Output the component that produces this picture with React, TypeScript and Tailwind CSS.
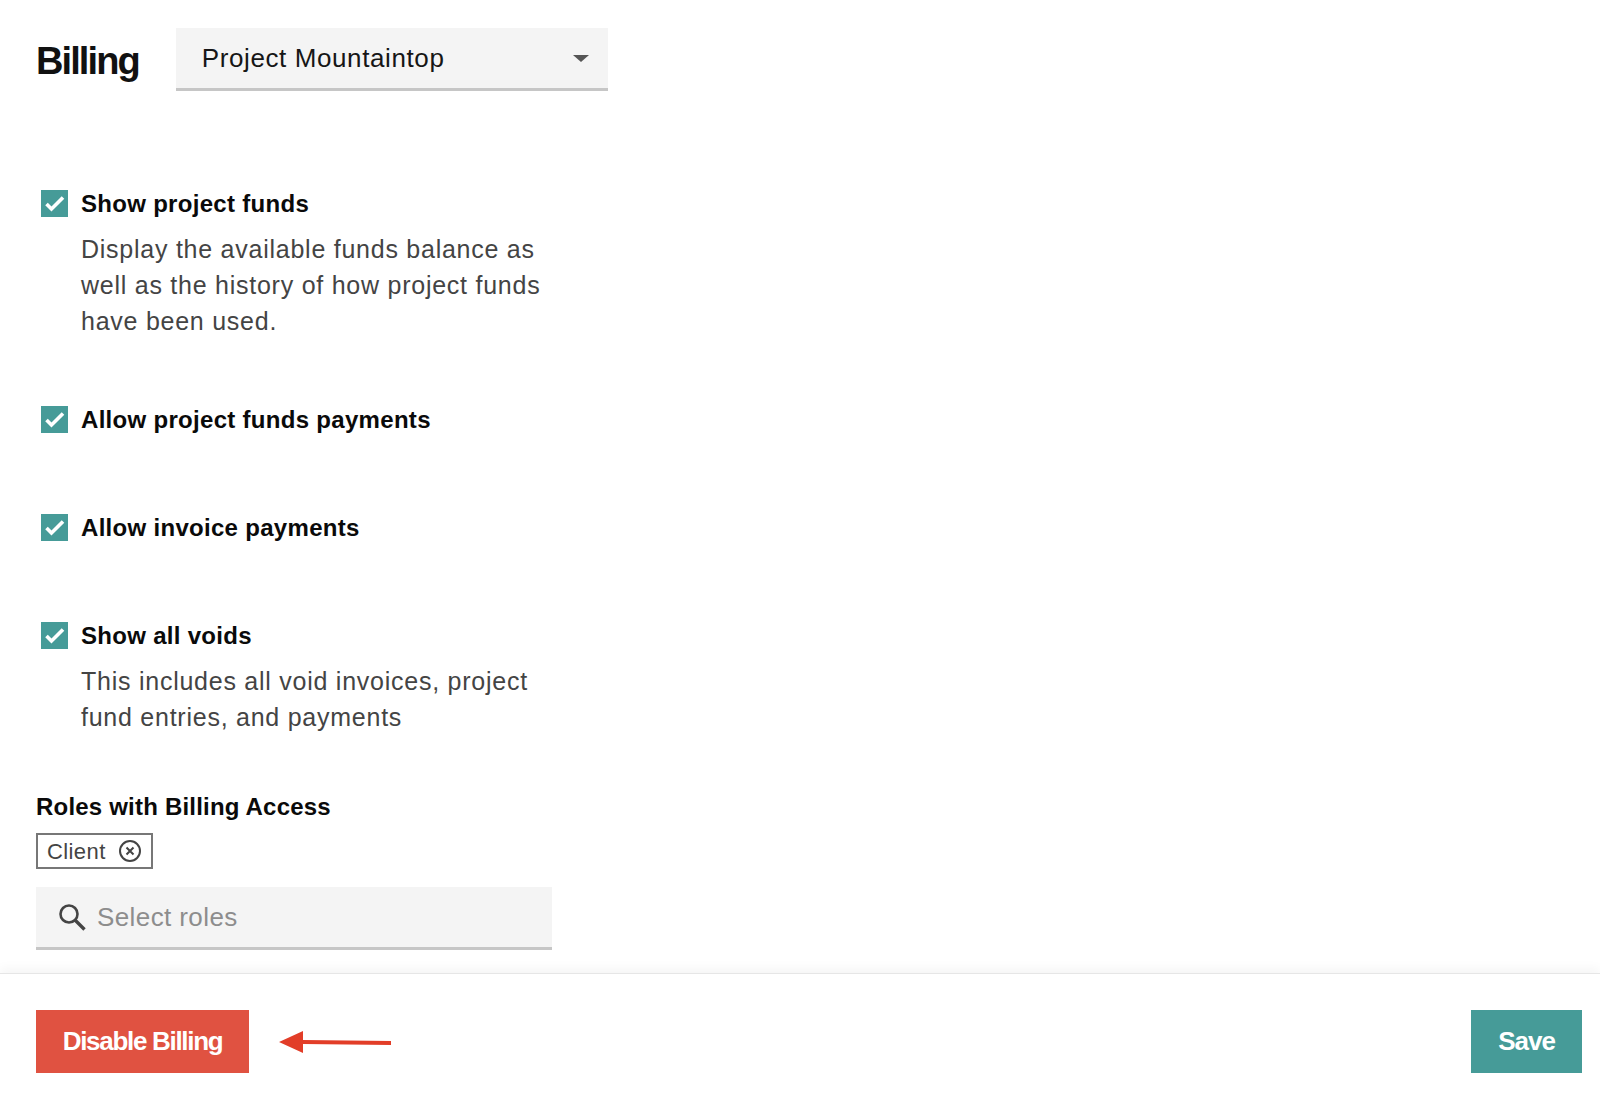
import React from "react";

const font = "font-['Liberation_Sans',Arial,sans-serif]";

const Check = () => (
  <span className="flex h-[27px] w-[27px] shrink-0 items-center justify-center bg-[#469b98]">
    <svg viewBox="0 0 27 27" className="h-[27px] w-[27px]" fill="none">
      <path d="M5.5 14l5 5L22 7.5" stroke="#fff" strokeWidth="3.6" />
    </svg>
  </span>
);

const Option = ({ label, lines, className }: { label: string; lines?: string[]; className: string }) => (
  <div className={`flex gap-[13px] pl-[5px] ${className}`}>
    <Check />
    <div>
      <div className="text-[24px] leading-[27px] font-bold tracking-[0.3px] text-[#0a0a0a]">{label}</div>
      {lines && (
        <div className="mt-[14px] text-[25px] leading-[36px] tracking-[0.75px] text-[#444]">
          {lines.map((l) => (
            <div key={l}>{l}</div>
          ))}
        </div>
      )}
    </div>
  </div>
);

export default function App() {
  return (
    <div className={`flex h-[1105px] flex-col overflow-hidden bg-white ${font}`}>
      <div className="flex-1 pl-9">
        <div className="flex items-start gap-[37px] pt-7">
          <h1 className="pt-[2px] text-[38px] leading-[63px] font-bold tracking-[-1.9px] text-[#111]">Billing</h1>
          <div className="flex h-[63px] w-[432px] items-center justify-between border-b-[3px] border-[#c6c6c6] bg-[#f4f4f4] pr-[19px] pl-[26px]">
            <span className="text-[26px] tracking-[0.6px] text-[#161616]">Project Mountaintop</span>
            <span className="h-0 w-0 border-x-[8px] border-t-[7px] border-x-transparent border-t-[#555]" />
          </div>
        </div>

        <Option
          className="mt-[97px]"
          label="Show project funds"
          lines={["Display the available funds balance as", "well as the history of how project funds", "have been used."]}
        />
        <Option className="mt-[67px]" label="Allow project funds payments" />
        <Option className="mt-[81px]" label="Allow invoice payments" />
        <Option
          className="mt-[81px]"
          label="Show all voids"
          lines={["This includes all void invoices, project", "fund entries, and payments"]}
        />

        <div className="mt-[54px] text-[24px] leading-[36px] font-bold tracking-[0.2px] text-[#0a0a0a]">
          Roles with Billing Access
        </div>
        <div className="mt-[8px] inline-flex h-9 w-[117px] items-center gap-[12px] border-2 border-[#777] pl-[9px] text-[22px] tracking-[0.4px] text-[#444]">
          Client
          <svg viewBox="0 0 24 24" className="h-6 w-6" fill="none" stroke="#444" strokeWidth="2">
            <circle cx="12" cy="12" r="10" />
            <path d="M8.5 8.5l7 7M15.5 8.5l-7 7" />
          </svg>
        </div>
        <div className="mt-[18px] flex h-[63px] w-[516px] items-center gap-[11px] border-b-[3px] border-[#c6c6c6] bg-[#f4f4f4] pl-[22px]">
          <svg viewBox="0 0 28 28" className="h-7 w-7" fill="none" stroke="#444">
            <circle cx="11" cy="11" r="8.5" strokeWidth="2.6" />
            <path d="M17 17l9.5 9.5" strokeWidth="3.4" />
          </svg>
          <span className="text-[26px] tracking-[0.4px] text-[#8d8d8d]">Select roles</span>
        </div>
      </div>

      <div className="flex h-[132px] items-start justify-between border-t border-[#e6e6e6] pt-[36px] pr-[18px] pl-9 shadow-[0_-5px_10px_rgba(0,0,0,0.04)]">
        <div className="flex items-center gap-[30px]">
          <button className="flex h-[63px] w-[213px] items-center justify-center bg-[#e05241] text-[26px] font-bold tracking-[-1.3px] text-white">
            Disable Billing
          </button>
          <svg viewBox="0 0 112 24" className="h-6 w-[112px]" fill="#e23d28">
            <path d="M0 12L24 1v9l88 1v4l-88-1v9z" />
          </svg>
        </div>
        <button className="flex h-[63px] w-[111px] items-center justify-center bg-[#469b98] text-[26px] font-bold tracking-[-1px] text-white">
          Save
        </button>
      </div>
    </div>
  );
}
